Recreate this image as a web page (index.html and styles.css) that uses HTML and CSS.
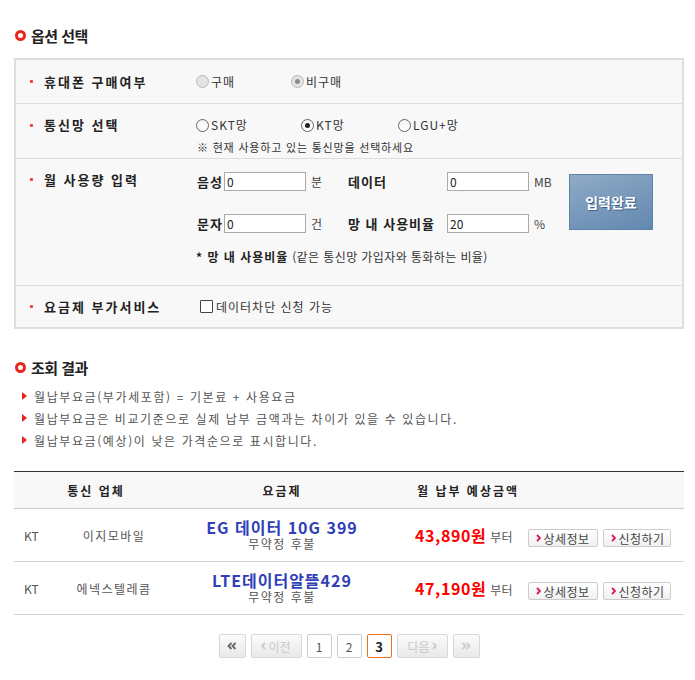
FILE: index.html
```html
<!DOCTYPE html>
<html lang="ko">
<head>
  <meta charset="UTF-8">
  <meta name="viewport" content="width=device-width, initial-scale=1.0">
  <title>요금제 조회</title>
  <link rel="stylesheet" href="styles.css">
</head>
<body>
<div class="wrap">
  <h2 class="sec-title"><span class="ring"></span>옵션 선택</h2>
  <div class="opt-box">
    <div class="opt-row row-buy">
      <div class="opt-label"><span class="req"></span>휴대폰 구매여부</div>
      <div class="opt-field">
        <span class="radio off w-buy"><i></i>구매</span>
        <span class="radio off on"><i></i>비구매</span>
      </div>
    </div>
    <div class="opt-row row-net">
      <div class="opt-label"><span class="req"></span>통신망 선택</div>
      <div class="opt-field">
        <div class="radio-line">
          <span class="radio w-skt"><i></i>SKT망</span>
          <span class="radio on w-kt"><i></i>KT망</span>
          <span class="radio"><i></i>LGU+망</span>
        </div>
        <p class="hint">※ 현재 사용하고 있는 통신망을 선택하세요</p>
      </div>
    </div>
    <div class="opt-row row-use">
      <div class="opt-label"><span class="req"></span>월 사용량 입력</div>
      <div class="opt-field">
        <div class="use-grid">
          <b class="use-name">음성</b><input type="text" class="num" value="0"><span class="unit">분</span>
          <b class="use-name">데이터</b><input type="text" class="num" value="0"><span class="unit">MB</span>
          <button class="btn-done">입력완료</button>
          <b class="use-name">문자</b><input type="text" class="num" value="0"><span class="unit">건</span>
          <b class="use-name">망 내 사용비율</b><input type="text" class="num" value="20"><span class="unit">%</span>
        </div>
        <p class="use-note"><b>* 망 내 사용비율</b> (같은 통신망 가입자와 통화하는 비율)</p>
      </div>
    </div>
    <div class="opt-row row-add">
      <div class="opt-label"><span class="req"></span>요금제 부가서비스</div>
      <div class="opt-field">
        <span class="check"><i></i>데이터차단 신청 가능</span>
      </div>
    </div>
  </div>

  <h2 class="sec-title result-title"><span class="ring"></span>조회 결과</h2>
  <ul class="info-list">
    <li>월납부요금(부가세포함) = 기본료 + 사용요금</li>
    <li>월납부요금은 비교기준으로 실제 납부 금액과는 차이가 있을 수 있습니다.</li>
    <li>월납부요금(예상)이 낮은 가격순으로 표시합니다.</li>
  </ul>

  <table class="result">
    <colgroup>
      <col class="c-net"><col class="c-corp"><col class="c-plan"><col class="c-price">
    </colgroup>
    <tr>
      <th colspan="2" class="th-corp">통신 업체</th>
      <th>요금제</th>
      <th class="th-price">월 납부 예상금액</th>
    </tr>
    <tr>
      <td class="net">KT</td>
      <td class="corp">이지모바일</td>
      <td class="plan"><a class="plan-name">EG 데이터 10G 399</a><span class="plan-sub">무약정 후불</span></td>
      <td class="price-cell"><span class="price">43,890원</span><span class="from">부터</span><span class="btn-sm w1"><svg width="5" height="8" viewBox="0 0 5 8"><path d="M1 1l3 3-3 3" fill="none" stroke="#e2126a" stroke-width="1.8"/></svg>상세정보</span><span class="btn-sm"><svg width="5" height="8" viewBox="0 0 5 8"><path d="M1 1l3 3-3 3" fill="none" stroke="#e2126a" stroke-width="1.8"/></svg>신청하기</span></td>
    </tr>
    <tr>
      <td class="net">KT</td>
      <td class="corp">에넥스텔레콤</td>
      <td class="plan"><a class="plan-name">LTE데이터알뜰429</a><span class="plan-sub">무약정 후불</span></td>
      <td class="price-cell"><span class="price">47,190원</span><span class="from">부터</span><span class="btn-sm w1"><svg width="5" height="8" viewBox="0 0 5 8"><path d="M1 1l3 3-3 3" fill="none" stroke="#e2126a" stroke-width="1.8"/></svg>상세정보</span><span class="btn-sm"><svg width="5" height="8" viewBox="0 0 5 8"><path d="M1 1l3 3-3 3" fill="none" stroke="#e2126a" stroke-width="1.8"/></svg>신청하기</span></td>
    </tr>
  </table>

  <div class="paging">
    <span class="pg-btn pg-end"><svg width="10" height="8" viewBox="0 0 10 8"><path d="M4.5 1l-3 3 3 3M8.5 1l-3 3 3 3" fill="none" stroke="#666" stroke-width="1.8"/></svg></span>
    <span class="pg-btn pg-step dis"><svg width="5" height="8" viewBox="0 0 5 8"><path d="M4 1l-3 3 3 3" fill="none" stroke="#ccc" stroke-width="1.8"/></svg>이전</span>
    <span class="pg-num">1</span>
    <span class="pg-num">2</span>
    <span class="pg-num cur">3</span>
    <span class="pg-btn pg-step dis">다음<svg width="5" height="8" viewBox="0 0 5 8"><path d="M1 1l3 3-3 3" fill="none" stroke="#ccc" stroke-width="1.8"/></svg></span>
    <span class="pg-btn pg-end dis"><svg width="10" height="8" viewBox="0 0 10 8"><path d="M1.5 1l3 3-3 3M5.5 1l3 3-3 3" fill="none" stroke="#ccc" stroke-width="1.8"/></svg></span>
  </div>
</div>
</body>
</html>
```

FILE: styles.css
```css
body {
  margin: 0;
  font-family: "Noto Sans CJK KR", sans-serif;
  font-size: 12px;
  color: #333;
  background-color: #fff;
}

.wrap {
  width: 670px;
  margin-left: 14px;
  padding-top: 23px;
}

/* 섹션 제목 */
.sec-title {
  display: flex;
  align-items: center;
  height: 24px;
  margin: 0 0 11px;
  font-size: 15px;
  font-weight: bold;
  color: #222;
  letter-spacing: -0.5px;
}

.ring {
  width: 5px;
  height: 5px;
  margin: 0 5px 0 1px;
  border: 3px solid #e8261c;
  border-radius: 50%;
}

/* 옵션 박스 */
.opt-box {
  border: 2px solid #dedede;
  background-color: #f8f8f8;
}

.opt-row {
  display: flex;
  box-sizing: border-box;
  border-top: 1px solid #ddd;
}

.opt-row:first-child {
  border-top: 0;
}

.row-buy { height: 43px; align-items: center; }
.row-net { height: 55px; padding-top: 13px; align-items: flex-start; }
.row-use { height: 127px; padding-top: 13px; align-items: flex-start; }
.row-add { height: 42px; align-items: center; }

.opt-label {
  width: 166px;
  padding-left: 14px;
  font-size: 13px;
  font-weight: bold;
  color: #222;
  letter-spacing: 2px;
  line-height: 16px;
  display: flex;
  align-items: center;
}

.row-use .opt-label {
  line-height: 15px;
}

.req {
  width: 3px;
  height: 3px;
  margin-right: 11px;
  background-color: #f0363a;
  border-radius: 1px;
}

.opt-field {
  display: flex;
  flex-direction: column;
  line-height: 16px;
}

.row-buy .opt-field,
.radio-line {
  flex-direction: row;
  display: flex;
}

/* 라디오 / 체크박스 */
.radio {
  display: flex;
  align-items: center;
  color: #333;
  letter-spacing: 1px;
}

.radio i {
  box-sizing: border-box;
  width: 13px;
  height: 13px;
  margin-right: 2px;
  border: 1px solid #666;
  border-radius: 50%;
  background: linear-gradient(#f4f4f4, #fff);
  display: flex;
  align-items: center;
  justify-content: center;
}

.radio.on i::after {
  content: "";
  width: 5px;
  height: 5px;
  border-radius: 50%;
  background-color: #222;
}

.radio.off i {
  border-color: #b9b9b9;
  background: #e4e4e4;
}

.radio.off.on i::after {
  background-color: #8a8a8a;
}

.w-buy { width: 95px; }
.w-skt { width: 105px; }
.w-kt { width: 97px; }

.hint {
  margin: 6px 0 0 1px;
  font-size: 11px;
  letter-spacing: 0.8px;
  color: #333;
}

.check {
  display: flex;
  align-items: center;
  margin-left: 4px;
  letter-spacing: 1px;
}

.check i {
  box-sizing: border-box;
  width: 13px;
  height: 13px;
  margin-right: 3px;
  border: 1px solid #444;
  border-radius: 1px;
  background-color: #fff;
}

/* 사용량 입력 */
.use-grid {
  display: grid;
  grid-template-columns: 28px 82px 41px 100px 82px 40px 84px;
  grid-template-rows: 19px 19px;
  row-gap: 23px;
  align-items: center;
}

.use-name {
  font-size: 13px;
  color: #222;
  letter-spacing: 1px;
  white-space: nowrap;
  margin-left: 1px;
}

.num {
  box-sizing: border-box;
  width: 82px;
  height: 19px;
  margin: 0;
  padding: 0 2px;
  border: 1px solid #aaa;
  background-color: #fff;
  font-family: "Noto Sans CJK KR", sans-serif;
  font-size: 12px;
  color: #222;
}

.unit {
  padding-left: 5px;
  color: #444;
}

.btn-done {
  grid-column: 7;
  grid-row: 1 / 3;
  align-self: start;
  width: 84px;
  height: 56px;
  margin-top: 2px;
  border: 1px solid #5f84aa;
  background: linear-gradient(160deg, #8fabc6, #6388b0);
  color: #fff;
  font-family: "Noto Sans CJK KR", sans-serif;
  font-size: 14px;
  font-weight: bold;
  text-shadow: 1px 1px 0 #3f628a;
  cursor: pointer;
}

.use-note {
  margin: 16px 0 0;
  letter-spacing: 0.4px;
  color: #333;
}

.use-note b {
  color: #222;
  letter-spacing: 1px;
}

/* 조회 결과 */
.result-title {
  margin-top: 26px;
  margin-bottom: 6px;
}

.info-list {
  list-style: none;
  margin: 0 0 20px;
  padding: 0 0 0 8px;
}

.info-list li {
  display: flex;
  align-items: center;
  height: 22px;
  color: #555;
  letter-spacing: 1.6px;
}

.info-list li::before {
  content: "";
  width: 0;
  height: 0;
  margin-right: 7px;
  border-left: 5px solid #e5261f;
  border-top: 4px solid transparent;
  border-bottom: 4px solid transparent;
}

.result {
  width: 670px;
  table-layout: fixed;
  border-collapse: collapse;
  border-top: 1px solid #333;
}

.c-net { width: 50px; }
.c-corp { width: 100px; }
.c-plan { width: 236px; }
.c-price { width: 284px; }

.result th {
  height: 36px;
  padding: 0;
  background-color: #f8f8f8;
  border-bottom: 1px solid #ccc;
  font-size: 12px;
  color: #222;
  letter-spacing: 2px;
}

.result .th-corp {
  padding-left: 14px;
}

.result .th-price {
  text-align: left;
  padding-left: 17px;
}

.result td {
  height: 52px;
  padding: 0;
  border-bottom: 1px solid #d3d3d3;
  color: #555;
}

.net {
  padding-left: 10px !important;
}

.corp {
  text-align: center;
  letter-spacing: 1.5px;
}

.plan {
  text-align: center;
}

.plan-name {
  display: block;
  font-size: 16px;
  font-weight: bold;
  line-height: 18px;
  color: #3040b8;
  letter-spacing: 1px;
}

.plan-sub {
  display: block;
  line-height: 16px;
  letter-spacing: 1.5px;
  color: #555;
}

.price-cell {
  padding-left: 15px !important;
  white-space: nowrap;
}

.price {
  font-size: 16px;
  font-weight: bold;
  color: #f00;
  letter-spacing: 0.6px;
}

.from {
  margin: 0 16px 0 4px;
  color: #555;
}

.btn-sm {
  display: inline-flex;
  align-items: center;
  box-sizing: border-box;
  width: 68px;
  height: 18px;
  margin-right: 5px;
  padding-left: 7px;
  border: 1px solid #ccc;
  border-radius: 2px;
  background: linear-gradient(#fff, #f1f1f1);
  color: #444;
  letter-spacing: 0.5px;
  vertical-align: middle;
}

.btn-sm.w1 {
  width: 70px;
}

.btn-sm svg {
  margin-right: 2px;
}

/* 페이징 */
.paging {
  display: flex;
  justify-content: center;
  gap: 5px;
  margin-top: 19px;
}

.pg-btn,
.pg-num {
  display: flex;
  align-items: center;
  justify-content: center;
  box-sizing: border-box;
  height: 24px;
  border-radius: 2px;
}

.pg-btn {
  border: 1px solid #d8d8d8;
  background: linear-gradient(#fbfbfb, #e9e9e9);
  color: #666;
}

.pg-btn.dis {
  color: #c8c8c8;
}

.pg-end { width: 27px; }
.pg-step { width: 51px; gap: 2px; }

.pg-num {
  width: 25px;
  border: 1px solid #ccc;
  background-color: #fff;
  color: #555;
  font-size: 12px;
}

.pg-num.cur {
  border-color: #f26a1b;
  color: #222;
  font-weight: bold;
  font-size: 13px;
}
```
